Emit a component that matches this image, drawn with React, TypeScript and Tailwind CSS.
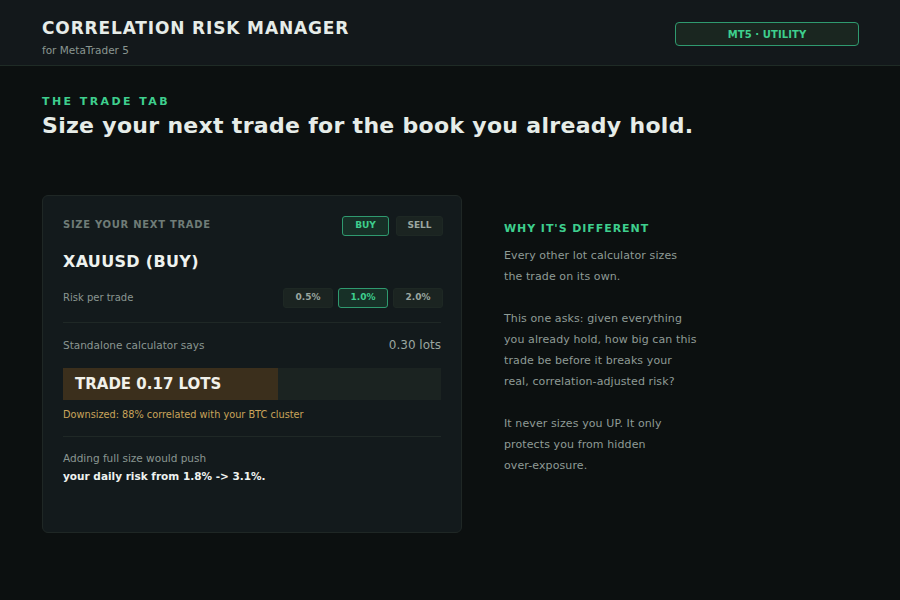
import React from "react";

const font = { fontFamily: '"DejaVu Sans", Verdana, sans-serif' };

function Pill({ label, active, w = "w-[47px]" }: { label: string; active?: boolean; w?: string }) {
  return (
    <div
      className={
        "flex h-[20px] items-center justify-center rounded-[3px] border text-[9px] font-bold " +
        w +
        (active
          ? " border-[#2f9a6f] bg-[#173027] text-[#3ecf8e]"
          : " border-[#1e2824] bg-[#1b2421] text-[#9aa6a0]")
      }
    >
      {label}
    </div>
  );
}

export default function App() {
  return (
    <div style={font} className="min-h-[600px] w-full bg-[#0c1010] text-[#e6ece8]">
      <header className="flex h-[66px] items-start justify-between border-b border-[#1f2b26] bg-[#13181b] px-[42px] pt-[17px]">
        <div className="flex flex-col">
          <h1 className="text-[17px] font-bold leading-[22px] tracking-[0.05em] text-[#e6ece8]">
            CORRELATION RISK MANAGER
          </h1>
          <p className="mt-[4px] text-[10.5px] leading-[14px] text-[#8a9691]">for MetaTrader 5</p>
        </div>
        <div className="ml-auto mr-[-1px] mt-[5px] flex h-[24px] w-[184px] items-center justify-center rounded-[4px] border border-[#2f9a6f] bg-[#1a2620] text-[10px] font-bold tracking-[0.01em] text-[#3ecf8e]">
          MT5 · UTILITY
        </div>
      </header>

      <main className="px-[42px] pt-[29px]">
        <p className="text-[11px] font-bold leading-[14px] tracking-[0.22em] text-[#3ecf8e]">THE TRADE TAB</p>
        <h2 className="mt-[3px] text-[22px] font-bold leading-[28px] tracking-[0.3px] text-[#e6ece8]">
          Size your next trade for the book you already hold.
        </h2>

        <div className="mt-[55px] flex gap-[42px]">
          <section className="h-[338px] w-[420px] rounded-[6px] border border-[#1f2725] bg-[#131a1c] px-[20px] pt-[20px]">
            <div className="flex items-center justify-between">
              <span className="mb-[3px] text-[10px] font-bold tracking-[0.07em] text-[#6f7c77]">SIZE YOUR NEXT TRADE</span>
              <div className="mr-[-2px] flex gap-[7px]">
                <Pill label="BUY" active />
                <Pill label="SELL" />
              </div>
            </div>

            <h3 className="mt-[16px] text-[16px] font-bold leading-[20px] tracking-[0.02em] text-[#eef2ef]">
              XAUUSD (BUY)
            </h3>

            <div className="mt-[16px] flex items-center justify-between">
              <span className="mb-[2px] text-[10px] text-[#8a9691]">Risk per trade</span>
              <div className="mr-[-2px] flex gap-[5px]">
                <Pill label="0.5%" w="w-[50px]" />
                <Pill label="1.0%" active w="w-[50px]" />
                <Pill label="2.0%" w="w-[50px]" />
              </div>
            </div>

            <div className="mt-[14px] border-t border-[#1f2826]" />

            <div className="mt-[14px] flex items-center justify-between leading-[16px]">
              <span className="text-[10.5px] text-[#8a9691]">Standalone calculator says</span>
              <span className="text-[12px] text-[#9aa6a0]">0.30 lots</span>
            </div>

            <div className="mt-[15px] flex h-[32px] w-full bg-[#1b2321]">
              <div className="flex h-full w-[57%] items-center bg-[#3b2f1c] pl-[12px]">
                <span className="text-[15px] font-bold text-[#f1f1ea]">TRADE 0.17 LOTS</span>
              </div>
            </div>

            <p className="mt-[8px] text-[9.75px] leading-[14px] text-[#c9a45a]">
              Downsized: 88% correlated with your BTC cluster
            </p>

            <div className="mt-[14px] border-t border-[#1f2826]" />

            <p className="mt-[13px] text-[10.5px] leading-[16px] text-[#8a9691]">Adding full size would push</p>
            <p className="mt-[2px] text-[10.5px] font-bold leading-[16px] text-[#eef2ef]">
              your daily risk from 1.8% -&gt; 3.1%.
            </p>
          </section>

          <aside className="w-[194px] pt-[27px]">
            <h4 className="text-[11px] font-bold leading-[14px] tracking-[0.085em] text-[#3ecf8e]">WHY IT'S DIFFERENT</h4>
            <div className="mt-[9px] space-y-[21px] text-[11px] leading-[21px] tracking-[0.1px] text-[#8f9b96]">
              <p>Every other lot calculator sizes the trade on its own.</p>
              <p>
                This one asks: given everything you already hold, how big can this trade be before it breaks your
                real, correlation-adjusted risk?
              </p>
              <p>
                It never sizes you UP. It only protects you from hidden{" "}
                <span className="whitespace-nowrap">over-exposure.</span>
              </p>
            </div>
          </aside>
        </div>
      </main>
    </div>
  );
}
